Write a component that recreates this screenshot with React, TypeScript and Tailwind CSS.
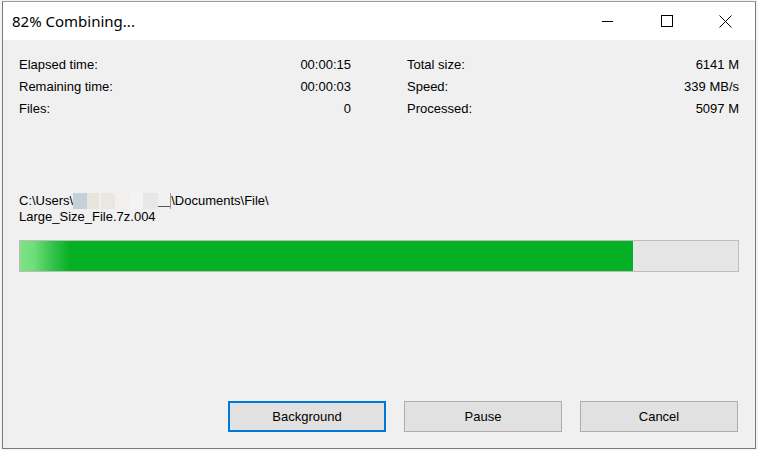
import React from "react";

const rowsLeft = [
  ["Elapsed time:", "00:00:15"],
  ["Remaining time:", "00:00:03"],
  ["Files:", "0"],
];
const rowsRight = [
  ["Total size:", "6141 M"],
  ["Speed:", "339 MB/s"],
  ["Processed:", "5097 M"],
];

function StatCol({ rows }: { rows: string[][] }) {
  return (
    <div className="flex flex-col">
      {rows.map(([k, v]) => (
        <div key={k} className="flex h-[22px] items-center justify-between">
          <span>{k}</span>
          <span>{v}</span>
        </div>
      ))}
    </div>
  );
}

export default function App() {
  return (
    <div
      className="w-[758px] h-[450px] bg-[#f4f4f4] pl-[2px] pr-[2px] pt-[1px] pb-[1px] overflow-hidden"
      style={{ fontFamily: '"Liberation Sans", Arial, sans-serif' }}
    >
      <div className="flex h-full w-full flex-col border border-[#7a7a7a] border-t-[#9a9a9a] bg-[#f0f0f0]">
        {/* Title bar */}
        <div className="flex h-[38px] items-center bg-white">
          <div
            className="pl-[9px] text-[15px] text-black"
            style={{ fontFamily: '"Noto Sans", "Open Sans", sans-serif' }}
          >
            82% Combining...
          </div>
          <div className="ml-auto flex h-full">
            <div className="flex h-full w-[59px] items-center justify-center">
              <div className="h-px w-[11px] bg-black" />
            </div>
            <div className="flex h-full w-[59px] items-center justify-center">
              <div className="h-[12px] w-[12px] border border-black" />
            </div>
            <div className="flex h-full w-[59px] items-center justify-center">
              <svg width="13" height="13" viewBox="0 0 13 13">
                <path d="M0.5 0.5 L12.5 12.5 M12.5 0.5 L0.5 12.5" stroke="#000" strokeWidth="1" fill="none" />
              </svg>
            </div>
          </div>
        </div>

        {/* Body */}
        <div className="flex flex-1 flex-col px-[16px] pt-[14px] text-[13px] text-black">
          <div className="grid grid-cols-[332px_332px] gap-x-[56px]">
            <StatCol rows={rowsLeft} />
            <StatCol rows={rowsRight} />
          </div>

          <div className="mt-[73px] flex flex-col leading-[16px]">
            <div className="flex items-center">
              <span>C:\Users\</span>
              <span className="inline-flex h-[16px] items-stretch">
                <span className="w-[14px] bg-[#c6d1d7]" />
                <span className="w-[12px] bg-[#e8e4dc]" />
                <span className="w-[2px] bg-[#f0f0f0]" />
                <span className="w-[14px] bg-[#eae7e0]" />
                <span className="w-[15px] bg-[#f1f0ee]" />
                <span className="w-[13px] bg-[#f4f4f4]" />
                <span className="w-[15px] bg-[#e7e7e7]" />
                <span className="relative w-[12px]">
                  <span className="absolute bottom-[2px] left-0 h-px w-[12px] bg-[#555]" />
                </span>
                <span className="w-px bg-[#9a9a9a]" />
              </span>
              <span>\Documents\File\</span>
            </div>
            <div>Large_Size_File.7z.004</div>
          </div>

          <div className="mt-[15px] h-[32px] border border-[#bcbcbc] bg-[#e6e6e6]">
            <div className="h-full w-[613px] bg-[linear-gradient(90deg,#7ce387_0px,#6fdc7b_14px,#2fc247_34px,#06b025_50px)]" />
          </div>

          <div className="mt-auto mb-[16px] flex justify-end gap-[18px] pr-[1px]">
            <button className="h-[31px] w-[158px] border-2 border-[#0078d7] bg-[#e1e1e1] text-[13px] text-black">
              Background
            </button>
            <button className="h-[31px] w-[158px] border border-[#adadad] bg-[#e1e1e1] text-[13px] text-black">
              Pause
            </button>
            <button className="h-[31px] w-[158px] border border-[#adadad] bg-[#e1e1e1] text-[13px] text-black">
              Cancel
            </button>
          </div>
        </div>
      </div>
    </div>
  );
}
